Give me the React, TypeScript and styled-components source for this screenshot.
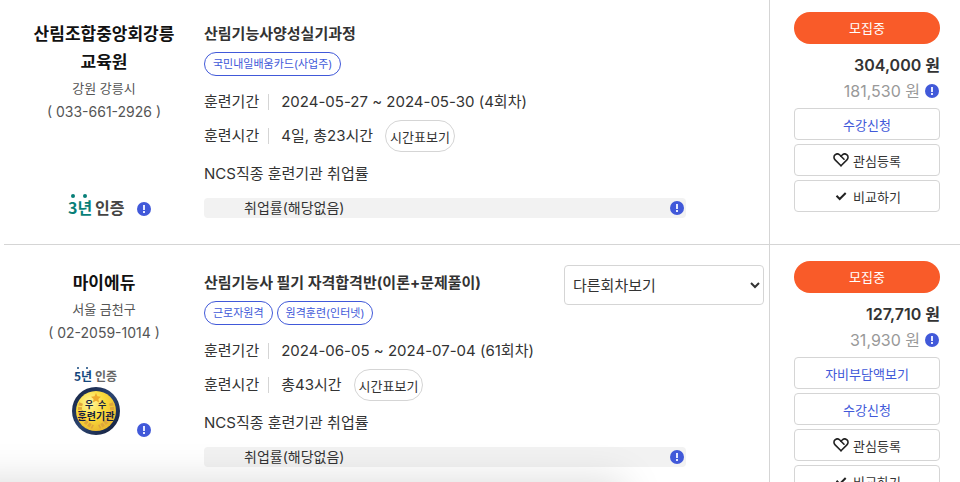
import React from "react";
import styled, { createGlobalStyle } from "styled-components";

const GlobalStyle = createGlobalStyle`
  *, *::before, *::after { box-sizing: border-box; }
  body {
    margin: 0;
    background: #fff;
    color: #333;
    font-family: Inter, "Noto Sans CJK KR", sans-serif;
    font-size: 15px;
    line-height: 24px;
  }
  button, select { font-family: inherit; color: inherit; cursor: pointer; }
  h2, h3, p, dl, dt, dd { margin: 0; }
`;

const Page = styled.main`
  position: relative;
  height: 100vh;
  overflow: hidden;
`;

const CourseList = styled.div`
  display: flex;
  flex-direction: column;
  margin-top: -4px;
`;

const CourseRow = styled.article`
  display: grid;
  grid-template-columns: 200px minmax(0, 1fr) 191px;
  margin-left: 4px;
  border-bottom: 1px solid #d5d5d5;
`;

const Institute = styled.section`
  display: flex;
  flex-direction: column;
  align-items: center;
  padding: 24px 28px 26px;
  text-align: center;
`;

const InstituteName = styled.h2`
  font-size: 17px;
  line-height: 28px;
  font-weight: 700;
  color: #111;
  word-break: break-all;
`;

const InstituteInfo = styled.p<{ $phone?: boolean }>`
  font-size: ${(p) => (p.$phone ? "14px" : "13px")};
  line-height: 24px;
  color: #555;
  white-space: nowrap;
`;

const Certification = styled.div`
  display: flex;
  align-items: flex-end;
  gap: 8px;
  margin-top: 22px;
  height: 72px;
  padding-bottom: 2px;
`;

const CertImage = styled.svg`
  width: 72px;
  height: 72px;
  align-self: flex-start;
  flex: none;
`;

const Details = styled.section`
  padding: 20px 5px 26px 0;
`;

const Header = styled.div`
  display: flex;
  align-items: flex-start;
  justify-content: space-between;
  height: 60px;
`;

const Heading = styled.div`
  display: flex;
  flex-direction: column;
  gap: 4px;
  padding-top: 4px;
`;

const CourseTitle = styled.h3`
  font-size: 15px;
  line-height: 28px;
  font-weight: 700;
`;

const Tags = styled.div`
  display: flex;
  gap: 4px;
`;

const Tag = styled.span`
  height: 24px;
  padding: 0 8px;
  border: 1px solid #4159d9;
  border-radius: 12px;
  font-size: 11px;
  line-height: 22px;
  color: #4159d9;
`;

const SessionSelect = styled.select`
  width: 200px;
  height: 40px;
  padding: 0 4px;
  border: 1px solid #d5d5d5;
  border-radius: 4px;
  background: #fff;
  font-size: 15px;
`;

const Facts = styled.dl`
  padding-top: 14px;
`;

const Fact = styled.div`
  display: flex;
  align-items: center;
  min-height: 32px;
  &:first-child { min-height: 24px; margin-bottom: 6px; }
`;

const FactLabel = styled.dt`
  display: flex;
  align-items: center;
  gap: 9px;
  &::after {
    content: "";
    width: 1px;
    height: 16px;
    background: #d5d5d5;
  }
`;

const FactValue = styled.dd`
  display: flex;
  align-items: center;
  gap: 12px;
  padding-left: 12px;
`;

const ScheduleButton = styled.button`
  height: 32px;
  padding: 0 4px;
  border: 1px solid #d5d5d5;
  border-radius: 16px;
  background: #fff;
  font-size: 13px;
`;

const RateTitle = styled.p`
  padding-top: 10px;
`;

const RateBar = styled.div`
  display: flex;
  align-items: center;
  justify-content: space-between;
  width: 86%;
  height: 20px;
  margin-top: 12px;
  padding: 0 2px 0 40px;
  border-radius: 4px;
  background: #f2f2f2;
  font-size: 14px;
  line-height: 20px;
`;

const Actions = styled.aside`
  display: flex;
  flex-direction: column;
  gap: 4px;
  padding: 16px 20px 26px 24px;
  border-left: 1px solid #d5d5d5;
`;

const Status = styled.div`
  height: 32px;
  border-radius: 16px;
  background: #f95b29;
  color: #fff;
  font-size: 13px;
  line-height: 32px;
  text-align: center;
`;

const Prices = styled.div`
  padding-top: 4px;
  text-align: right;
  line-height: 26px;
`;

const Price = styled.p`
  font-size: 16px;
  font-weight: 600;
`;

const OwnPrice = styled.p`
  display: flex;
  align-items: center;
  justify-content: flex-end;
  gap: 5px;
  padding-right: 1px;
  font-size: 16px;
  color: #999;
`;

const ActionButton = styled.button<{ $primary?: boolean }>`
  display: flex;
  align-items: center;
  justify-content: center;
  gap: 4px;
  height: 32px;
  padding: 0;
  border: 1px solid #d5d5d5;
  border-radius: 4px;
  background: #fff;
  font-size: 13px;
  color: ${(p) => (p.$primary ? "#4159d9" : "#333")};
`;

const InfoButton = styled.button`
  display: block;
  flex: none;
  width: 14px;
  height: 14px;
  padding: 0;
  border: 0;
  background: none;
  svg { display: block; }
`;

const BottomShade = styled.div`
  position: absolute;
  left: -40px;
  right: 35%;
  bottom: -80px;
  height: 80px;
  box-shadow: 0 0 40px rgba(0, 0, 0, 0.15);
`;

const Info = () => (
  <InfoButton type="button" aria-label="도움말">
    <svg width="14" height="14" viewBox="0 0 14 14">
      <circle cx="7" cy="7" r="7" fill="#4159d9" />
      <path d="M6 3h2v5H6zM6 9h2v2H6z" fill="#e6eaff" />
    </svg>
  </InfoButton>
);

const HeartIcon = () => (
  <svg width="16" height="14" viewBox="0 0 16 14" fill="none" stroke="#222" strokeWidth="1.6" strokeLinejoin="round" strokeLinecap="round">
    <path d="M8 12.7 2.1 6.9C.6 5.4.6 3.2 2 1.9c1.4-1.3 3.5-1.2 4.8.1L11 6.2" />
    <path d="M8 12.7l5.900-5.800c1.500-1.500 1.500-3.700.1-5-1.400-1.300-3.500-1.200-4.800.1L7.900 3.200" />
  </svg>
);

const CheckIcon = () => (
  <svg width="16" height="14" viewBox="0 0 16 14" fill="none" stroke="#222" strokeWidth="2">
    <path d="M3.500 6.800l3.200 3.200 6-6" />
  </svg>
);

const badgeFont = '"Noto Sans CJK KR", sans-serif';

const ThreeYearBadge = () => (
  <CertImage viewBox="0 0 72 72" role="img" aria-label="3년 인증">
    <circle cx="16" cy="50" r="2" fill="#087f78" />
    <circle cx="28" cy="50" r="2" fill="#087f78" />
    <text x="11" y="68" fontSize="16" fontWeight="700" fill="#087f78" fontFamily={badgeFont}>3년</text>
    <text x="38" y="68" fontSize="16" fontWeight="700" fill="#444" fontFamily={badgeFont}>인증</text>
  </CertImage>
);

const FiveYearBadge = () => (
  <CertImage viewBox="0 0 72 72" role="img" aria-label="5년 인증 우수훈련기관">
    <defs>
      <radialGradient id="gold" cx="0.35" cy="0.3" r="0.8">
        <stop offset="0" stopColor="#fff6a0" />
        <stop offset="0.45" stopColor="#fbdc3c" />
        <stop offset="1" stopColor="#e8b32c" />
      </radialGradient>
      <linearGradient id="navy" x1="0" y1="0" x2="1" y2="1">
        <stop offset="0" stopColor="#13203f" />
        <stop offset="0.5" stopColor="#2b4470" />
        <stop offset="1" stopColor="#101a36" />
      </linearGradient>
    </defs>
    <circle cx="21" cy="1" r="1" fill="#14477d" />
    <circle cx="30" cy="1" r="1" fill="#14477d" />
    <text x="17" y="14" fontSize="12" fontWeight="700" fill="#14477d" fontFamily={badgeFont}>5년</text>
    <text x="38" y="14" fontSize="12" fontWeight="700" fill="#666" fontFamily={badgeFont}>인증</text>
    <circle cx="39" cy="44" r="24" fill="url(#navy)" />
    <circle cx="39" cy="44" r="20" fill="url(#gold)" />
    <path d="M39 26l1.500 3.300 3.500.4-2.600 2.400.7 3.500-3.100-1.800-3.100 1.800.7-3.500-2.600-2.400 3.500-.4z" fill="#eeaa2c" />
    <path d="M24 36c-3 9 0 18 12 24M54 36c3 9 0 18-12 24" fill="none" stroke="#dfa63c" strokeWidth="4" strokeDasharray="3 1" />
    <text x="28" y="41" fontSize="9" fontWeight="700" fill="#12203f" fontFamily={badgeFont}>우</text>
    <text x="41" y="41" fontSize="9" fontWeight="700" fill="#12203f" fontFamily={badgeFont}>수</text>
    <text x="39" y="53" textAnchor="middle" fontSize="10" fontWeight="700" fill="#12203f" fontFamily={badgeFont}>훈련기관</text>
  </CertImage>
);

type Course = {
  institute: string;
  region: string;
  phone: string;
  badge: React.ReactNode;
  title: string;
  tags: string[];
  period: string;
  hours: string;
  price: string;
  ownPrice: string;
  hasSessions?: boolean;
  hasOwnCost?: boolean;
};

const courses: Course[] = [
  {
    institute: "산림조합중앙회강릉교육원",
    region: "강원 강릉시",
    phone: "( 033-661-2926 )",
    badge: <ThreeYearBadge />,
    title: "산림기능사양성실기과정",
    tags: ["국민내일배움카드(사업주)"],
    period: "2024-05-27 ~ 2024-05-30 (4회차)",
    hours: "4일, 총23시간",
    price: "304,000 원",
    ownPrice: "181,530 원",
  },
  {
    institute: "마이에듀",
    region: "서울 금천구",
    phone: "( 02-2059-1014 )",
    badge: <FiveYearBadge />,
    title: "산림기능사 필기 자격합격반(이론+문제풀이)",
    tags: ["근로자원격", "원격훈련(인터넷)"],
    period: "2024-06-05 ~ 2024-07-04 (61회차)",
    hours: "총43시간",
    price: "127,710 원",
    ownPrice: "31,930 원",
    hasSessions: true,
    hasOwnCost: true,
  },
];

const CourseItem = ({ course }: { course: Course }) => (
  <CourseRow>
    <Institute>
      <InstituteName>{course.institute}</InstituteName>
      <InstituteInfo>{course.region}</InstituteInfo>
      <InstituteInfo $phone>{course.phone}</InstituteInfo>
      <Certification>
        {course.badge}
        <Info />
      </Certification>
    </Institute>
    <Details>
      <Header>
        <Heading>
          <CourseTitle>{course.title}</CourseTitle>
          <Tags>{course.tags.map((t) => <Tag key={t}>{t}</Tag>)}</Tags>
        </Heading>
        {course.hasSessions && (
          <SessionSelect aria-label="다른회차보기">
            <option>다른회차보기</option>
          </SessionSelect>
        )}
      </Header>
      <Facts>
        <Fact>
          <FactLabel>훈련기간</FactLabel>
          <FactValue>{course.period}</FactValue>
        </Fact>
        <Fact>
          <FactLabel>훈련시간</FactLabel>
          <FactValue>
            {course.hours}
            <ScheduleButton type="button">시간표보기</ScheduleButton>
          </FactValue>
        </Fact>
      </Facts>
      <RateTitle>NCS직종 훈련기관 취업률</RateTitle>
      <RateBar>
        취업률(해당없음)
        <Info />
      </RateBar>
    </Details>
    <Actions>
      <Status>모집중</Status>
      <Prices>
        <Price>{course.price}</Price>
        <OwnPrice>{course.ownPrice}<Info /></OwnPrice>
      </Prices>
      {course.hasOwnCost && <ActionButton type="button" $primary>자비부담액보기</ActionButton>}
      <ActionButton type="button" $primary>수강신청</ActionButton>
      <ActionButton type="button"><HeartIcon />관심등록</ActionButton>
      <ActionButton type="button"><CheckIcon />비교하기</ActionButton>
    </Actions>
  </CourseRow>
);

export default function App() {
  return (
    <>
      <GlobalStyle />
      <Page>
        <CourseList>
          {courses.map((c) => <CourseItem key={c.institute} course={c} />)}
        </CourseList>
        <BottomShade />
      </Page>
    </>
  );
}
